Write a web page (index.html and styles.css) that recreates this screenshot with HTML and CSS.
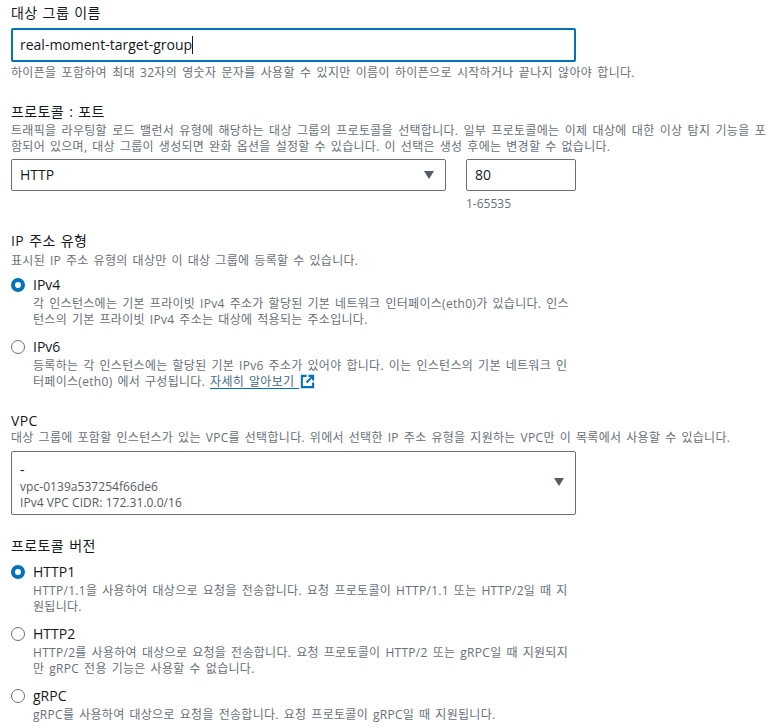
FILE: index.html
```html
<!DOCTYPE html>
<html lang="ko">
<head>
    <meta charset="UTF-8">
    <meta name="viewport" content="width=device-width, initial-scale=1.0">
    <title>대상 그룹 생성</title>
    <link rel="stylesheet" href="styles.css">
</head>
<body>
    <form class="target-form">
        <div class="field field-name">
            <label class="field-label">대상 그룹 이름</label>
            <div class="input input-focus">real-moment-target-group<span class="caret"></span></div>
            <p class="hint hint-below hint-wide">하이픈을 포함하여 최대 32자의 영숫자 문자를 사용할 수 있지만 이름이 하이픈으로 시작하거나 끝나지 않아야 합니다.</p>
        </div>

        <div class="field field-protocol">
            <label class="field-label">프로토콜 : 포트</label>
            <p class="hint"><span class="hint-wide">트래픽을 라우팅할 로드 밸런서 유형에 해당하는 대상 그룹의 프로토콜을 선택합니다. 일부 프로토콜에는 이제 대상에 대한 이상 탐지 기능을 포</span><br>함되어 있으며, 대상 그룹이 생성되면 완화 옵션을 설정할 수 있습니다. 이 선택은 생성 후에는 변경할 수 없습니다.</p>
            <div class="protocol-row">
                <div class="input select select-protocol">HTTP<span class="arrow"></span></div>
                <div class="port">
                    <div class="input">80</div>
                    <p class="hint hint-range">1-65535</p>
                </div>
            </div>
        </div>

        <div class="field field-ip">
            <label class="field-label">IP 주소 유형</label>
            <p class="hint">표시된 IP 주소 유형의 대상만 이 대상 그룹에 등록할 수 있습니다.</p>
            <div class="radio-group">
                <div class="radio radio-checked">
                    <span class="radio-mark"></span>
                    <div class="radio-body">
                        <div class="radio-title">IPv4</div>
                        <p class="hint">각 인스턴스에는 기본 프라이빗 IPv4 주소가 할당된 기본 네트워크 인터페이스(eth0)가 있습니다. 인스<br>턴스의 기본 프라이빗 IPv4 주소는 대상에 적용되는 주소입니다.</p>
                    </div>
                </div>
                <div class="radio">
                    <span class="radio-mark"></span>
                    <div class="radio-body">
                        <div class="radio-title">IPv6</div>
                        <p class="hint">등록하는 각 인스턴스에는 할당된 기본 IPv6 주소가 있어야 합니다. 이는 인스턴스의 기본 네트워크 인<br>터페이스(eth0) 에서 구성됩니다. <a class="link" href="#">자세히 알아보기 </a><svg class="external" viewBox="0 0 16 16" width="16" height="16"><path d="M7 2H2v12h12V9" fill="none" stroke="#0073bb" stroke-width="2.2"/><path d="M9 2h5v5M14 2L7 9" fill="none" stroke="#0073bb" stroke-width="2.2"/></svg></p>
                    </div>
                </div>
            </div>
        </div>

        <div class="field field-vpc">
            <label class="field-label">VPC</label>
            <p class="hint">대상 그룹에 포함할 인스턴스가 있는 VPC를 선택합니다. 위에서 선택한 IP 주소 유형을 지원하는 VPC만 이 목록에서 사용할 수 있습니다.</p>
            <div class="input select select-vpc">
                <div class="vpc-name">-</div>
                <div class="vpc-meta">vpc-0139a537254f66de6</div>
                <div class="vpc-meta">IPv4 VPC CIDR: 172.31.0.0/16</div>
                <span class="arrow"></span>
            </div>
        </div>

        <div class="field field-version">
            <label class="field-label">프로토콜 버전</label>
            <div class="radio-group">
                <div class="radio radio-checked">
                    <span class="radio-mark"></span>
                    <div class="radio-body">
                        <div class="radio-title">HTTP1</div>
                        <p class="hint">HTTP/1.1을 사용하여 대상으로 요청을 전송합니다. 요청 프로토콜이 HTTP/1.1 또는 HTTP/2일 때 지<br>원됩니다.</p>
                    </div>
                </div>
                <div class="radio">
                    <span class="radio-mark"></span>
                    <div class="radio-body">
                        <div class="radio-title">HTTP2</div>
                        <p class="hint">HTTP/2를 사용하여 대상으로 요청을 전송합니다. 요청 프로토콜이 HTTP/2 또는 gRPC일 때 지원되지<br>만 gRPC 전용 기능은 사용할 수 없습니다.</p>
                    </div>
                </div>
                <div class="radio">
                    <span class="radio-mark"></span>
                    <div class="radio-body">
                        <div class="radio-title">gRPC</div>
                        <p class="hint">gRPC를 사용하여 대상으로 요청을 전송합니다. 요청 프로토콜이 gRPC일 때 지원됩니다.</p>
                    </div>
                </div>
            </div>
        </div>
    </form>
</body>
</html>
```

FILE: styles.css
```css
body {
    margin: 0;
    font-family: "Open Sans", "Noto Sans CJK KR", sans-serif;
    font-size: 14px;
    color: #16191f;
    background-color: #fff;
    overflow: hidden;
}

.target-form {
    width: 777px;
    height: 728px;
    padding: 3px 0 0 11px;
    box-sizing: border-box;
    overflow: hidden;
}

.field-label {
    display: block;
    font-size: 14px;
    line-height: 20px;
    letter-spacing: 0.4px;
    word-spacing: 1px;
}

.hint {
    margin: 0;
    font-size: 12px;
    line-height: 16px;
    color: #687078;
    white-space: nowrap;
    letter-spacing: 0.3px;
    word-spacing: 1.5px;
}

.hint-wide {
    word-spacing: 1.8px;
}

.hint-below {
    margin-top: 3px;
}

.field-name .input {
    margin-top: 5px;
}

.field-protocol {
    margin-top: 21px;
}

.field-protocol .hint {
    margin-top: 1px;
}

.field-ip {
    margin-top: 19px;
}

.field-ip > .hint {
    margin-top: 2px;
}

.field-vpc {
    margin-top: 21px;
}

.field-vpc > .hint {
    margin-top: -1px;
}

.field-version {
    margin-top: 21px;
}

.input {
    width: 565px;
    height: 32px;
    box-sizing: border-box;
    padding: 0 8px;
    border: 1px solid #687078;
    border-radius: 2px;
    line-height: 30px;
    position: relative;
}

.input-focus {
    height: 34px;
    border: 2px solid #0073bb;
    padding: 0 7px;
}

.caret {
    display: inline-block;
    width: 1px;
    height: 18px;
    background: #16191f;
    vertical-align: -4px;
}

.protocol-row {
    display: flex;
    gap: 20px;
    margin-top: 4px;
}

.select-protocol {
    width: 435px;
}

.port .input {
    width: 110px;
}

.field-protocol .hint-range {
    margin-top: 5px;
    letter-spacing: 0;
}

.arrow {
    position: absolute;
    right: 11px;
    top: 11px;
    width: 0;
    height: 0;
    border-left: 5px solid transparent;
    border-right: 5px solid transparent;
    border-top: 8px solid #545b64;
}

.radio-group {
    margin-top: 6px;
}

.radio {
    display: flex;
    margin-bottom: 9px;
}

.radio-mark {
    width: 14px;
    height: 14px;
    box-sizing: border-box;
    border: 1px solid #687078;
    border-radius: 50%;
    margin-top: 3px;
    flex-shrink: 0;
}

.radio-checked .radio-mark {
    border: 4px solid #0073bb;
}

.radio-body {
    margin-left: 8px;
}

.radio-title {
    line-height: 20px;
    margin-bottom: 1px;
}

.link {
    color: #3f6a8a;
    text-decoration: underline;
    text-decoration-color: #0073bb;
    text-decoration-skip-ink: none;
    text-underline-offset: 2px;
}

.external {
    vertical-align: -3px;
    width: 15px;
    height: 15px;
    margin-left: 1px;
}

.select-vpc {
    height: 64px;
    margin-top: 5px;
    padding-top: 8px;
}

.vpc-name {
    line-height: 19px;
}

.vpc-meta {
    font-size: 12px;
    line-height: 16px;
    color: #545b64;
    letter-spacing: 0.05px;
}

.select-vpc .arrow {
    top: 26px;
}
```
